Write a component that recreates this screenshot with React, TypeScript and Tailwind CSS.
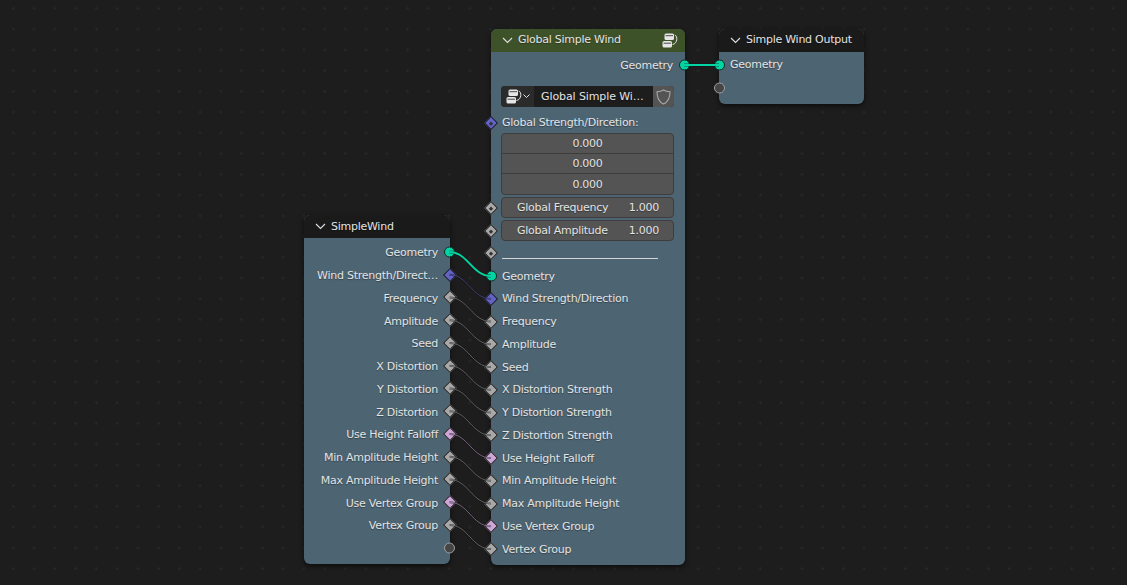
import React from "react";

const GREEN = "#00d6a3";
const PURPLE = "#6363c7";
const GREY = "#a1a1a1";
const PINK = "#cca6d6";

type Kind = "geo" | "vec" | "val" | "bool" | "empty";

function Socket({ kind, dot, side }: { kind: Kind; dot?: boolean; side: "l" | "r" }) {
  const pos = side === "l" ? "left-[-5.5px]" : "right-[-5px]";
  if (kind === "geo" || kind === "empty") {
    return (
      <span
        className={`absolute top-1/2 -translate-y-1/2 ${pos} w-[11px] h-[11px] rounded-full border ${
          kind === "geo" ? "bg-[#00d6a3] border-[#0d2a24]" : "bg-[#454545] border-[#a0a0a0]"
        }`}
      />
    );
  }
  const bg = kind === "vec" ? "bg-[#6363c7]" : kind === "bool" ? "bg-[#cca6d6]" : "bg-[#a8a8a8]";
  return (
    <span
      className={`absolute top-1/2 ${side === "l" ? "left-[-5px]" : "right-[-4.5px]"} w-[10px] h-[10px] -translate-y-1/2 rotate-45 border border-[#1c1c1c] flex items-center justify-center ${bg}`}
    >
      {dot && <span className="w-[3px] h-[3px] bg-[#333333]" />}
    </span>
  );
}

function Row({
  label,
  kind,
  side,
  dot,
}: {
  label?: string;
  kind: Kind;
  side: "l" | "r";
  dot?: boolean;
}) {
  return (
    <div
      className={`relative h-[22.75px] flex items-center whitespace-nowrap ${
        side === "l" ? "pl-[11px]" : "justify-end pr-[12px]"
      }`}
    >
      <Socket kind={kind} side={side} dot={dot} />
      <span className={side === "r" ? "pt-[2px]" : ""}>{label}</span>
    </div>
  );
}

function Chevron() {
  return (
    <svg width="11" height="7" viewBox="0 0 11 7" fill="none" className="shrink-0">
      <path d="M1 1 L5.5 5.5 L10 1" stroke="#e0e0e0" strokeWidth="1.1" />
    </svg>
  );
}

function GroupIcon() {
  return (
    <svg width="16" height="15" viewBox="0 0 16 15" fill="none" className="shrink-0">
      <rect x="2.5" y="0.5" width="9.5" height="6.5" rx="1.6" fill="#e6e6e6" />
      <rect x="3.5" y="2.2" width="7.5" height="1" fill="#4a4a4a" />
      <rect x="0.5" y="8" width="9.5" height="6.5" rx="1.6" fill="#e6e6e6" />
      <rect x="1.5" y="9.7" width="7.5" height="1" fill="#4a4a4a" />
      <path d="M12.8 2 C15.8 3 15.8 10.5 10.5 11.5" stroke="#e6e6e6" strokeWidth="1" />
    </svg>
  );
}

function Shield() {
  return (
    <svg width="15" height="16" viewBox="0 0 15 16" fill="none">
      <path
        d="M7.5 1 C9.5 2.2 11.5 2.6 14 2.7 C14 8 13 12.5 7.5 15 C2 12.5 1 8 1 2.7 C3.5 2.6 5.5 2.2 7.5 1 Z"
        stroke="#a8a8a8"
        strokeWidth="1.1"
      />
    </svg>
  );
}

function Header({
  title,
  green,
  icon,
  lift,
}: {
  title: string;
  green?: boolean;
  icon?: boolean;
  lift?: boolean;
}) {
  return (
    <div
      className={`h-[22.5px] rounded-t-[6px] flex items-center pl-[11px] pr-[7px] gap-[5px] ${
        green ? "bg-[#3e5229]" : "bg-[#1a1a1a]"
      }`}
    >
      <Chevron />
      <span className={`flex-1 whitespace-nowrap ${lift ? "pb-[2px]" : ""}`}>{title}</span>
      {icon && <GroupIcon />}
    </div>
  );
}

const left: [string, Kind][] = [
  ["Geometry", "geo"],
  ["Wind Strength/Direct…", "vec"],
  ["Frequency", "val"],
  ["Amplitude", "val"],
  ["Seed", "val"],
  ["X Distortion", "val"],
  ["Y Distortion", "val"],
  ["Z Distortion", "val"],
  ["Use Height Falloff", "bool"],
  ["Min Amplitude Height", "val"],
  ["Max Amplitude Height", "val"],
  ["Use Vertex Group", "bool"],
  ["Vertex Group", "val"],
];

const right: [string, Kind][] = [
  ["Geometry", "geo"],
  ["Wind Strength/Direction", "vec"],
  ["Frequency", "val"],
  ["Amplitude", "val"],
  ["Seed", "val"],
  ["X Distortion Strength", "val"],
  ["Y Distortion Strength", "val"],
  ["Z Distortion Strength", "val"],
  ["Use Height Falloff", "bool"],
  ["Min Amplitude Height", "val"],
  ["Max Amplitude Height", "val"],
  ["Use Vertex Group", "bool"],
  ["Vertex Group", "val"],
];

const wireColor: Record<string, string> = { geo: GREEN, vec: PURPLE, val: GREY, bool: PINK };

function Wires() {
  return (
    <svg className="absolute inset-0 pointer-events-none" width="1127" height="585" fill="none">
      {left.map(([, k], i) => {
        const y1 = 252 + i * 22.75;
        const y2 = 276 + i * 22.75;
        const d = `M449.5 ${y1} C 468 ${y1}, 472 ${y2}, 491 ${y2}`;
        return (
          <g key={i}>
            <path d={d} stroke="#111" strokeWidth={k === "geo" ? 3 : 2} opacity={0.6} />
            <path
              d={d}
              stroke={wireColor[k]}
              strokeWidth={k === "geo" ? 2 : 1}
              opacity={k === "geo" ? 1 : 0.55}
            />
          </g>
        );
      })}
      <path d="M684 65 L719 65" stroke="#111" strokeWidth="3" opacity={0.6} />
      <path d="M684 65 L719 65" stroke={GREEN} strokeWidth="2" />
    </svg>
  );
}

const nodeBase =
  "absolute rounded-[6px] bg-[#4d6472] shadow-[0_2px_5px_rgba(0,0,0,0.6)] text-[11px] tracking-[-0.26px] leading-none text-[#e3e3e3] [text-shadow:0_1px_1px_rgba(0,0,0,0.35)]";

function Slider({ label, value }: { label: string; value: string }) {
  return (
    <div className="relative h-[21px] rounded-[4px] bg-[#545454] border border-[#3d3d3d] flex items-center pl-[15px] pr-[14px] justify-between">
      <span>{label}</span>
      <span>{value}</span>
    </div>
  );
}

export default function App() {
  return (
    <div className="relative w-[1127px] h-[585px] overflow-hidden bg-[#1d1d1d] font-['DejaVu_Sans',sans-serif] bg-[radial-gradient(circle,#272727_1px,transparent_1.5px)] bg-[size:20.75px_20.75px] bg-[position:3px_-2px]">
      {/* SimpleWind */}
      <div className={`${nodeBase} left-[304px] top-[215px] w-[146px] h-[349px]`}>
        <Header title="SimpleWind" />
        <div className="pt-[3px]">
          {left.map(([l, k]) => (
            <Row key={l} label={l} kind={k} side="r" />
          ))}
          <Row kind="empty" side="r" />
        </div>
      </div>

      {/* Global Simple Wind */}
      <div className={`${nodeBase} left-[491px] top-[29px] w-[194px] h-[536px]`}>
        <Header title="Global Simple Wind" green icon lift />
        <div className="pt-[2px]">
          <Row label="Geometry" kind="geo" side="r" />
          <div className="ml-[10px] mr-[11px] mt-[10px] h-[21px] rounded-[4px] bg-[#1d1d1d] flex items-center overflow-hidden">
            <div className="h-full w-[33px] bg-[#2b2b2b] flex items-center justify-center gap-[1px] pl-[1px]">
              <GroupIcon />
              <svg width="7" height="5" viewBox="0 0 7 5" fill="none" className="shrink-0">
                <path d="M0.5 0.5 L3.5 3.5 L6.5 0.5" stroke="#e0e0e0" />
              </svg>
            </div>
            <div className="flex-1 pl-[7px] whitespace-nowrap tracking-[-0.1px]">Global Simple Wi…</div>
            <div className="h-full w-[21px] bg-[#545454] flex items-center justify-center">
              <Shield />
            </div>
          </div>
          <div className="mt-[4px] mb-[-1px]">
            <Row label="Global Strength/Dircetion:" kind="vec" side="l" dot />
          </div>
          <div className="ml-[10px] mr-[11px] rounded-[4px] border border-[#3d3d3d] bg-[#545454] text-center divide-y divide-[#3d3d3d]">
            <div className="h-[20px] flex items-center justify-center">0.000</div>
            <div className="h-[20px] flex items-center justify-center">0.000</div>
            <div className="h-[20px] flex items-center justify-center">0.000</div>
          </div>
          <div className="relative ml-[10px] mr-[11px] mt-[2px]">
            <div className="absolute left-[-10px] top-0 h-[21px] w-0">
              <Socket kind="val" side="l" dot />
            </div>
            <Slider label="Global Frequency" value="1.000" />
          </div>
          <div className="relative ml-[10px] mr-[11px] mt-[2px]">
            <div className="absolute left-[-10px] top-0 h-[21px] w-0">
              <Socket kind="val" side="l" dot />
            </div>
            <Slider label="Global Amplitude" value="1.000" />
          </div>
          <div className="mt-[1px]">
            <Row label="" kind="val" side="l" dot />
          </div>
          <div className="absolute left-[11px] top-[229px] w-[156px] h-px bg-[#d6d6d6]" />
          {right.map(([l, k]) => (
            <Row key={l} label={l} kind={k} side="l" />
          ))}
        </div>
      </div>

      {/* Simple Wind Output */}
      <div className={`${nodeBase} left-[719px] top-[29px] w-[145px] h-[75px]`}>
        <Header title="Simple Wind Output" lift />
        <div className="pt-[2px]">
          <Row label="Geometry" kind="geo" side="l" />
          <Row kind="empty" side="l" />
        </div>
      </div>

      <Wires />
    </div>
  );
}
